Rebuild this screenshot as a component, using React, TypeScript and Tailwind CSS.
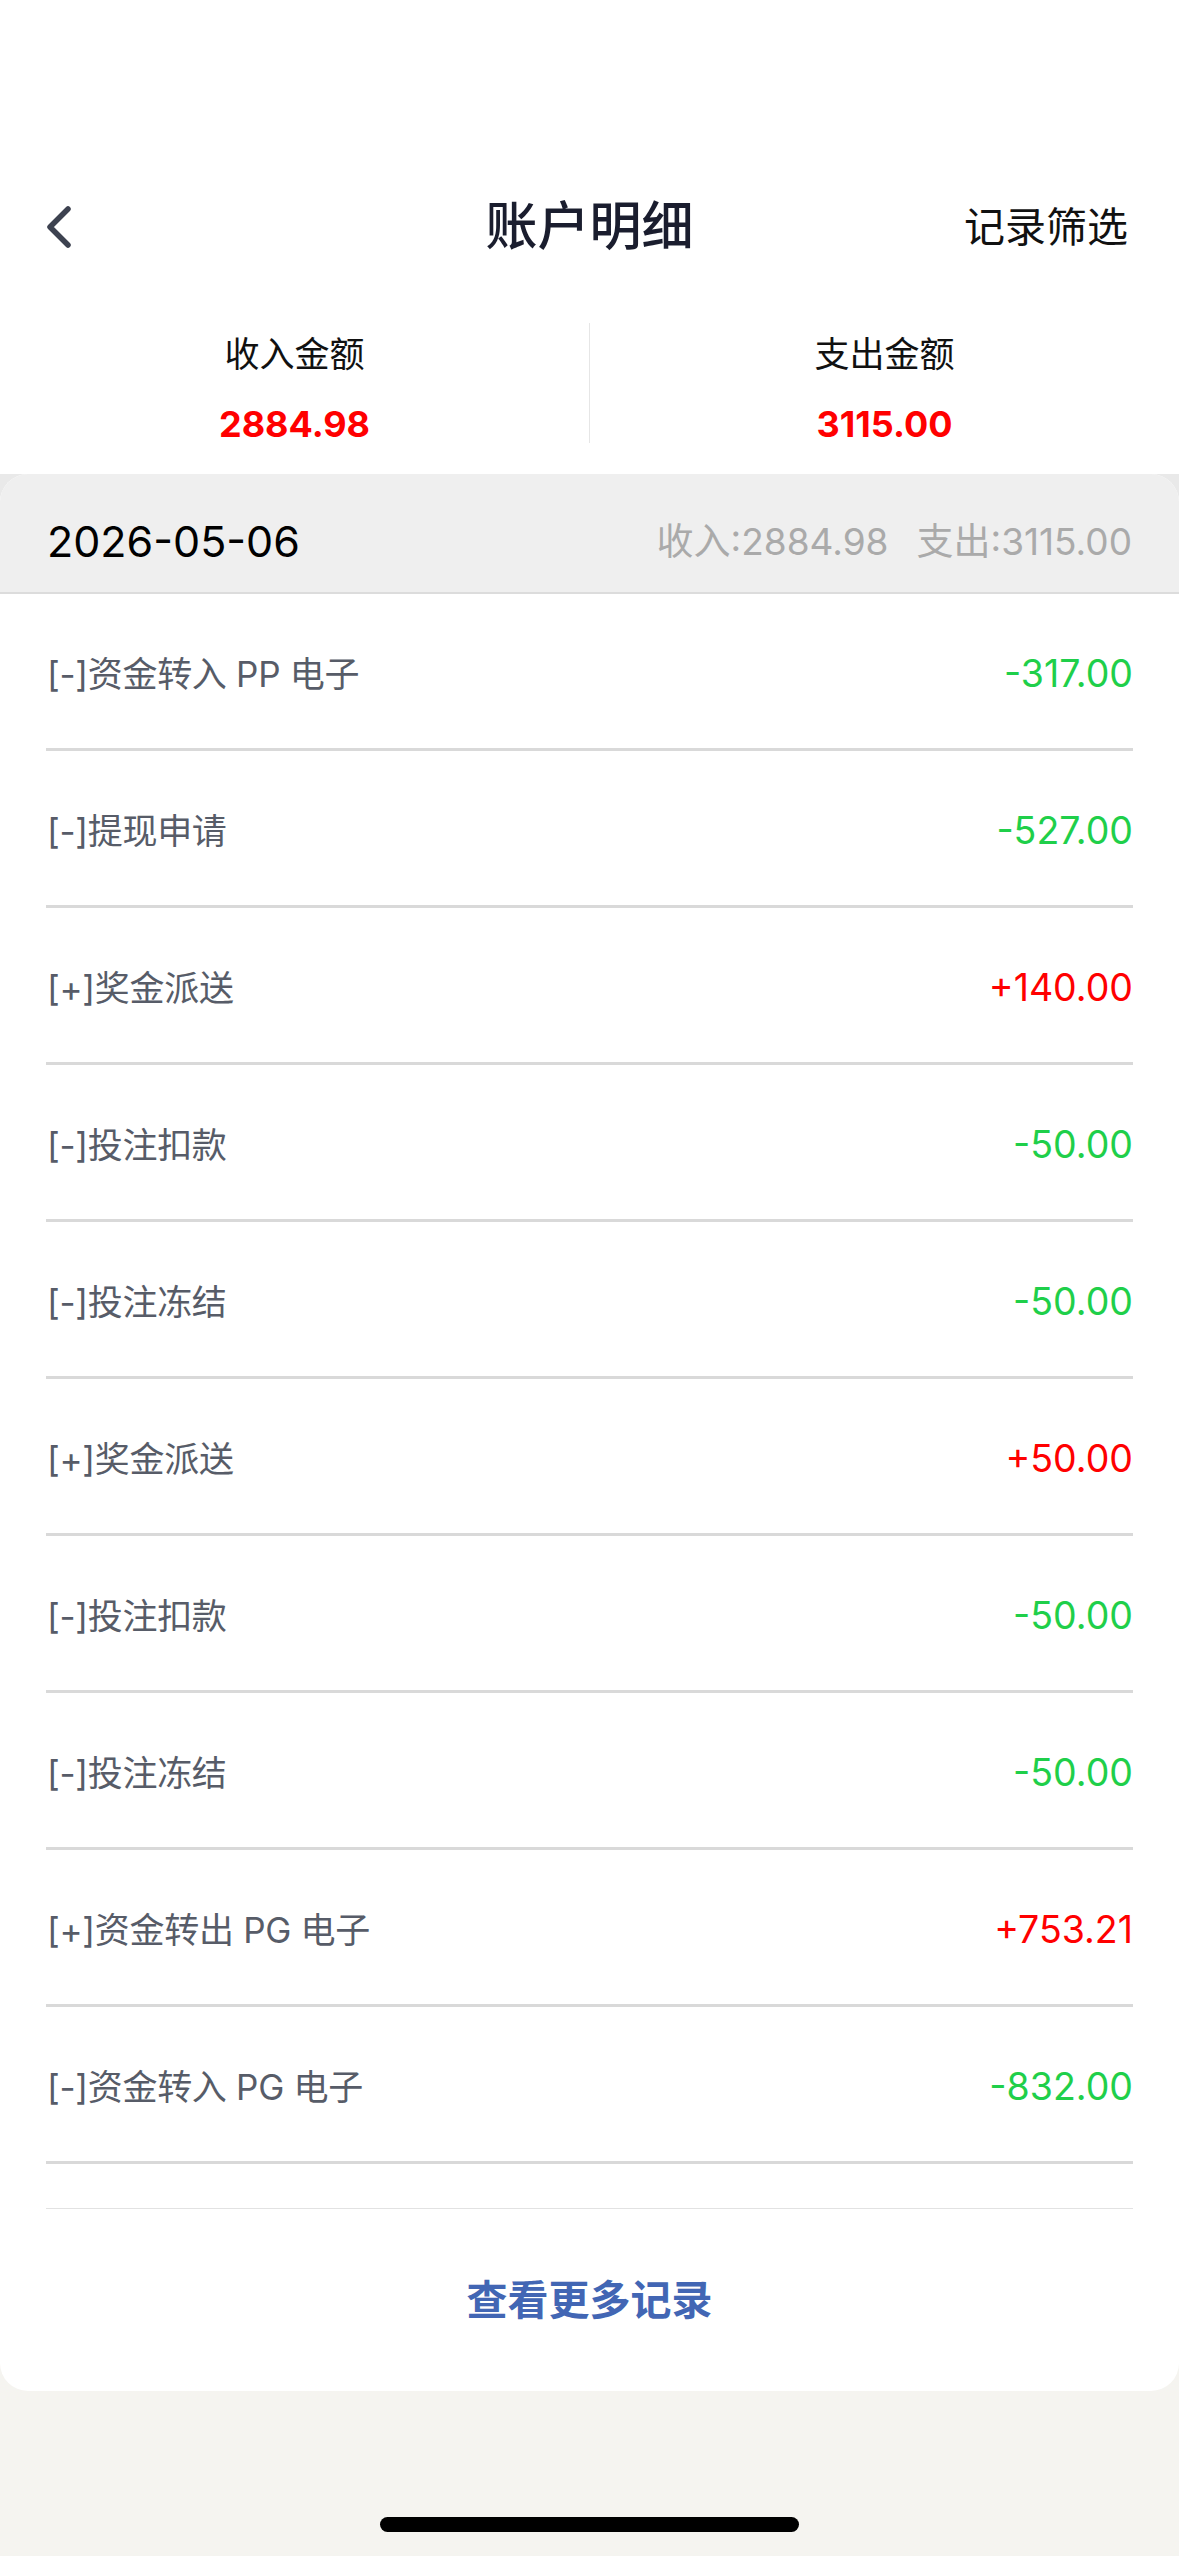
import React from 'react';

type Entry = { label: string; amount: string; income: boolean };

const entries: Entry[] = [
  { label: '[-]资金转入 PP 电子', amount: '-317.00', income: false },
  { label: '[-]提现申请', amount: '-527.00', income: false },
  { label: '[+]奖金派送', amount: '+140.00', income: true },
  { label: '[-]投注扣款', amount: '-50.00', income: false },
  { label: '[-]投注冻结', amount: '-50.00', income: false },
  { label: '[+]奖金派送', amount: '+50.00', income: true },
  { label: '[-]投注扣款', amount: '-50.00', income: false },
  { label: '[-]投注冻结', amount: '-50.00', income: false },
  { label: '[+]资金转出 PG 电子', amount: '+753.21', income: true },
  { label: '[-]资金转入 PG 电子', amount: '-832.00', income: false },
];

export default function App() {
  return (
    <div className="min-h-[2556px] w-[1179px] bg-[#f5f4f0] font-['Inter','Noto_Sans_CJK_SC',sans-serif] flex flex-col">
      {/* Top: nav + summary */}
      <div className="bg-white pt-[180px]">
        <div className="h-[94px] flex items-center justify-between pl-[44px] pr-[51px] relative">
          <svg width="32" height="48" viewBox="0 0 32 48" className="text-[#3d4250]">
            <path d="M24 6 L6 24 L24 42" fill="none" stroke="currentColor" strokeWidth="5.5" strokeLinecap="round" strokeLinejoin="round" />
          </svg>
          <h1 className="absolute left-1/2 -translate-x-1/2 text-[52px] leading-none font-medium text-[#1a1d2e]">账户明细</h1>
          <span className="text-[41px] leading-none text-[#111]">记录筛选</span>
        </div>

        <div className="pt-[49px] pb-[30px] flex">
          <div className="flex-1 flex flex-col items-center pt-[11px]">
            <div className="text-[35px] leading-[40px] text-[#111]">收入金额</div>
            <div className="mt-[30px] text-[36px] leading-[40px] font-bold text-[#ff0000]">2884.98</div>
          </div>
          <div className="w-px h-[120px] bg-[#e6e6e6]" />
          <div className="flex-1 flex flex-col items-center pt-[11px]">
            <div className="text-[35px] leading-[40px] text-[#111]">支出金额</div>
            <div className="mt-[30px] text-[36px] leading-[40px] font-bold text-[#ff0000]">3115.00</div>
          </div>
        </div>
      </div>

      {/* Records card */}
      <div className="bg-[linear-gradient(#e9e9e9_50%,#f5f4f0_50%)]">
        <div className="bg-white rounded-[28px] overflow-hidden">
          <div className="h-[120px] bg-[#efefef] border-b-2 border-[#dcdcdc] flex items-center justify-between px-[47px] pt-[16px]">
            <span className="text-[43px] leading-none text-black">2026-05-06</span>
            <div className="flex gap-[28px] text-[37px] leading-none text-[#aaaaaa]">
              <span>收入:2884.98</span>
              <span>支出:3115.00</span>
            </div>
          </div>

          <div className="px-[46px]">
            {entries.map((e, i) => (
              <div key={i} className="h-[157px] flex flex-col">
                <div className="flex-1 flex items-center justify-between pt-[6px] pl-px">
                  <span className="text-[35px] leading-none tracking-[-0.3px] text-[#575c68]">{e.label}</span>
                  <span className={e.income ? 'text-[37.5px] leading-none text-[#ff0000]' : 'text-[37.5px] leading-none text-[#1fcf4a]'}>
                    {e.amount}
                  </span>
                </div>
                <div className="h-[3px] bg-[#d9d9d9]" />
              </div>
            ))}
            <div className="h-[44px]" />
            <div className="h-px bg-[#e2e2e2]" />
          </div>

          <div className="h-[182px] flex items-center justify-center">
            <span className="text-[41px] leading-none font-bold text-[#4266b4]">查看更多记录</span>
          </div>
        </div>
      </div>

      {/* Home indicator */}
      <div className="flex-1 flex items-end justify-center pb-[24px]">
        <div className="w-[419px] h-[15px] rounded-full bg-black" />
      </div>
    </div>
  );
}
